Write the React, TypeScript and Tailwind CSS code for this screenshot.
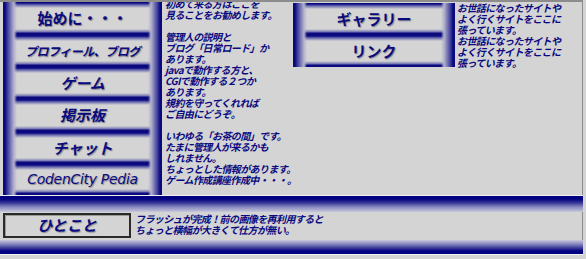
import React from "react";

const btn =
  "flex items-center justify-center text-[#0a0a80] [text-shadow:1px_1px_1px_#8a8a8a] font-bold bg-[#d4d4d4] bg-[linear-gradient(to_right,#0a0a7e_0px,#0a0a7e_2px,#4646a0_5px,#b4b4cc_11px,rgba(212,212,212,0)_14px),linear-gradient(to_left,#0a0a7e_0px,#0a0a7e_2px,#4646a0_5px,#b4b4cc_11px,rgba(212,212,212,0)_14px),linear-gradient(to_bottom,#0a0a7e_0px,#0a0a7e_1px,#6c6cb0_3px,rgba(212,212,212,0)_6px),linear-gradient(to_top,#0a0a7e_0px,#0a0a7e_2px,#7070b0_3px,rgba(212,212,212,0)_6px)]";

const jp = "font-['Noto_Sans_CJK_JP','Noto_Sans',sans-serif]";

function Lines({ lines }: { lines: string[] }) {
  return (
    <>
      {lines.map((l, i) => (
        <div key={i} className="h-[11px] whitespace-nowrap">
          {l === "" ? "\u00a0" : l}
        </div>
      ))}
    </>
  );
}

export default function App() {
  const mid = [
    "初めて来る方はここを",
    "見ることをお勧めします。",
    "",
    "管理人の説明と",
    "ブログ「日常ロード」か",
    "あります。",
    "javaで動作する方と、",
    "CGIで動作する２つか",
    "あります。",
    "規約を守ってくれれば",
    "ご自由にどうぞ。",
    "",
    "いわゆる「お茶の間」です。",
    "たまに管理人が来るかも",
    "しれません。",
    "ちょっとした情報があります。",
    "ゲーム作成講座作成中・・・。",
  ];
  const right = [
    "お世話になったサイトや",
    "よく行くサイトをここに",
    "張っています。",
    "お世話になったサイトや",
    "よく行くサイトをここに",
    "張っています。",
  ];
  const textCls = `${jp} text-[10px] leading-[11px] tracking-[-0.6px] font-bold italic text-[#0a0a80]`;
  return (
    <div className={`w-[586px] h-[259px] bg-[#d4d4d4] overflow-hidden ${jp}`}>
      <div className="w-[583px] flex flex-col border-t-2 border-[#8c8c8c] border-b border-b-[#f2f2f2]">
        {/* top section */}
        <div className="flex h-[193px] border-r border-[#8c8c8c]">
          <div className="ml-[3px] w-[159px] flex flex-col">
            <div className={`${btn} h-[33px] text-[15px]`}>始めに・・・</div>
            <div className={`${btn} h-[32px] text-[12px] tracking-[-0.5px] italic`}>プロフィール、ブログ</div>
            <div className={`${btn} h-[32px] text-[15px] italic`}>ゲーム</div>
            <div className={`${btn} h-[33px] text-[15px] italic`}>掲示板</div>
            <div className={`${btn} h-[32px] text-[15px] italic`}>チャット</div>
            <div className={`${btn} h-[31px] text-[14px] font-normal italic font-['DejaVu_Sans',sans-serif] tracking-[-0.3px]`}>
              CodenCity Pedia
            </div>
          </div>
          <div className="w-[131px] pl-[3px] overflow-hidden">
            <div className={`-mt-[4px] ${textCls}`}>
              <Lines lines={mid} />
            </div>
          </div>
          <div className="w-[162px] pt-px flex flex-col self-start">
            <div className={`${btn} h-[32px] text-[15px]`}>ギャラリー</div>
            <div className={`${btn} h-[32px] text-[15px]`}>リンク</div>
          </div>
          <div className={`pl-[2px] ${textCls}`}>
            <Lines lines={right} />
          </div>
        </div>
        <div className="h-px bg-[#efefef]" />
        {/* top band */}
        <div className="h-[16px] bg-[linear-gradient(to_bottom,#000080_0px,#000080_3px,#3a3a98_7px,#8888c0_11px,#c8c8dc_16px)]" />
        {/* middle row */}
        <div className="h-[28px] flex items-start border-r border-[#8c8c8c]">
          <div className="ml-[3px] mt-px w-[128px] h-[25px] border-2 border-[#2a2a2a] shadow-[inset_1px_1px_0_#9a9a9a] bg-[#d4d4d4] flex items-center justify-center text-[15px] font-bold italic text-[#0a0a80] [text-shadow:1px_1px_1px_#8a8a8a]">
            ひとこと
          </div>
          <div className={`ml-[4px] pt-px ${textCls}`}>
            <Lines
              lines={[
                "フラッシュが完成！前の画像を再利用すると",
                "ちょっと横幅が大きくて仕方が無い。",
              ]}
            />
          </div>
        </div>
        {/* bottom band */}
        <div className="h-[14px] bg-[linear-gradient(to_top,#000080_0px,#000080_3px,#3a3a98_6px,#8888c0_10px,#c8c8dc_14px)]" />
      </div>
    </div>
  );
}
